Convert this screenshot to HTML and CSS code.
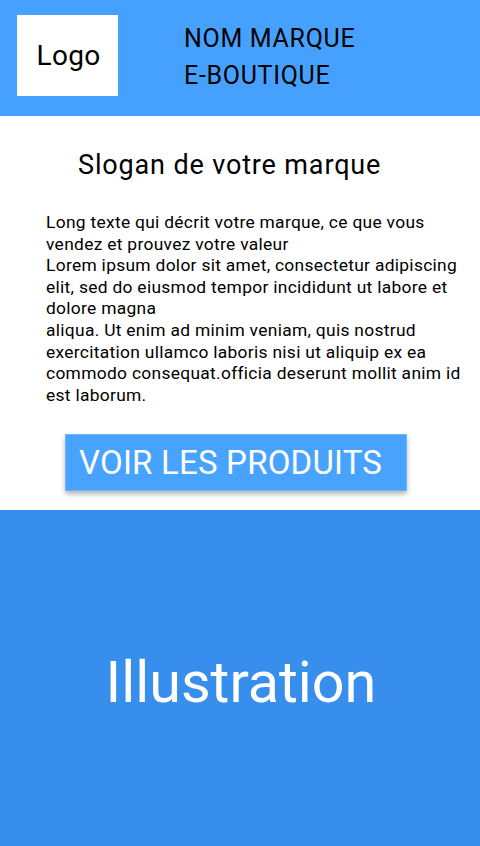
FILE: index.html
```html
<!DOCTYPE html>
<html lang="fr">
<head>
<meta charset="utf-8">
<link rel="stylesheet" href="styles.css">
</head>
<body>
<header class="header">
  <div class="logo">Logo</div>
  <div class="brand">NOM MARQUE<br>E-BOUTIQUE</div>
</header>
<main class="content">
  <h1 class="slogan">Slogan de votre marque</h1>
  <p class="text">Long texte qui décrit votre marque, ce que vous vendez et prouvez votre valeur<br>Lorem ipsum dolor sit amet, consectetur adipiscing elit, sed do eiusmod tempor incididunt ut labore et dolore magna<br>aliqua. Ut enim ad minim veniam, quis nostrud exercitation ullamco laboris nisi ut aliquip ex ea commodo consequat.officia deserunt mollit anim id est laborum.</p>
  <div class="cta-row"><button class="cta">VOIR LES PRODUITS</button></div>
</main>
<section class="illustration">Illustration</section>
</body>
</html>
```
FILE: styles.css
```css
* { box-sizing: border-box; }
html, body { margin: 0; padding: 0; }
body {
  width: 480px;
  height: 846px;
  overflow: hidden;
  font-family: Roboto, "Liberation Sans", sans-serif;
  color: #000;
  background: #fff;
  display: flex;
  flex-direction: column;
}
.header {
  background: #46a1fe;
  height: 116px;
  flex: none;
  display: flex;
  align-items: flex-start;
  padding: 15px 0 0 17px;
}
.logo {
  width: 101px;
  height: 81px;
  background: #fff;
  display: flex;
  align-items: center;
  justify-content: center;
  font-size: 28px;
  letter-spacing: 0.3px;
  padding-left: 2px;
}
.brand {
  margin-left: 66px;
  margin-top: 5px;
  font-size: 25px;
  letter-spacing: 0.7px;
  line-height: 37px;
}
.content {
  display: flex;
  flex-direction: column;
  flex: none;
}
.slogan {
  margin: 31px 0 0 78px;
  font-size: 27px;
  letter-spacing: 0.85px;
  font-weight: 400;
  line-height: 36px;
}
.text {
  margin: 29px 0 0 46px;
  width: 425px;
  font-size: 17.4px;
  letter-spacing: 0.3px;
  line-height: 21.6px;
}
.cta-row {
  padding: 28px 0 0 65px;
}
.cta {
  width: 342px;
  height: 57px;
  background: #48a3ff;
  border: 1px solid #6fb6ff;
  color: #fff;
  font-family: Roboto, "Liberation Sans", sans-serif;
  font-size: 33px;
  letter-spacing: 0.2px;
  text-align: left;
  padding: 0 0 0 13px;
  box-shadow: 0 3px 5px rgba(0,0,0,0.3);
}
.illustration {
  margin-top: 19px;
  flex: 1;
  background: #378eec;
  color: #fff;
  font-size: 57.5px;
  display: flex;
  align-items: center;
  justify-content: center;
  padding: 8px 0 0 2px;
}
```
